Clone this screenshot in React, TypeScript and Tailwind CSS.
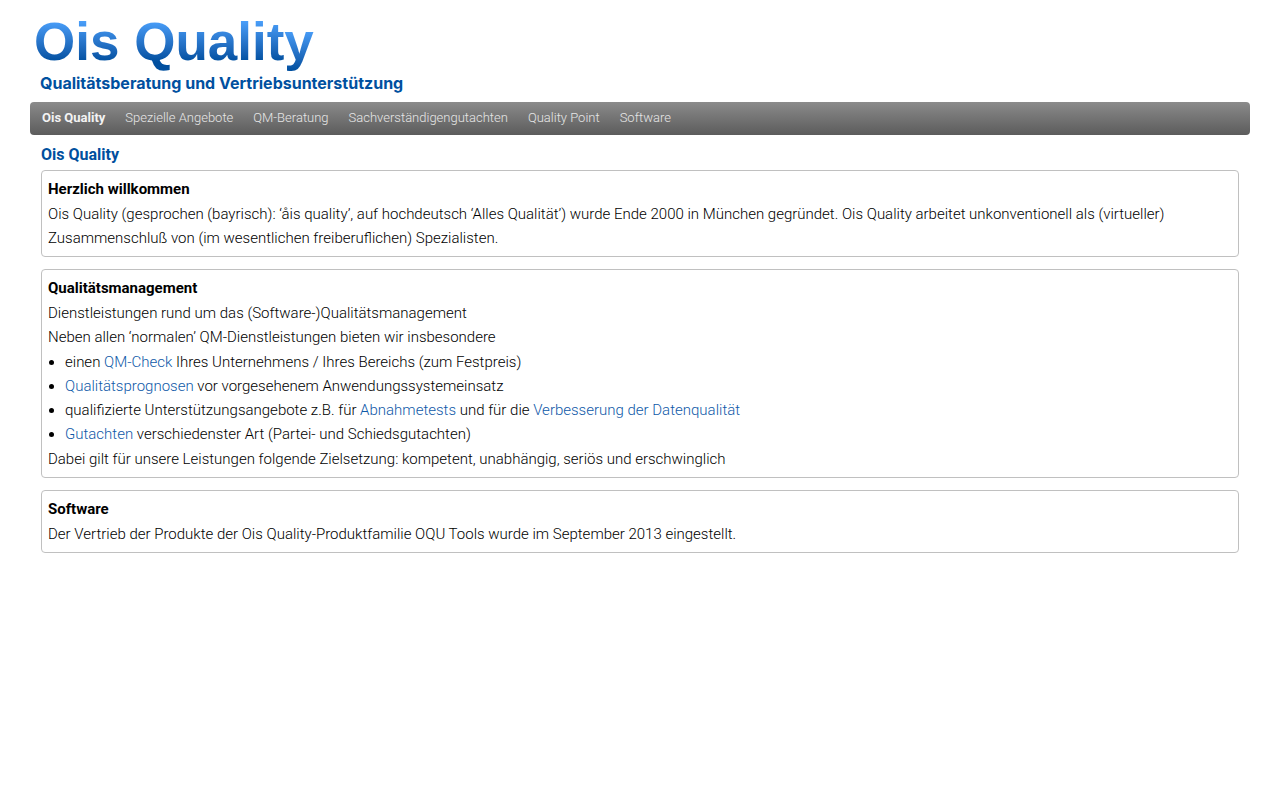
import type { ReactNode } from "react";
import clsx from "clsx";

const navItems = [
  "Ois Quality",
  "Spezielle Angebote",
  "QM-Beratung",
  "Sachverständigengutachten",
  "Quality Point",
  "Software",
];

interface PanelProps {
  title: string;
  children: ReactNode;
}

function Panel({ title, children }: PanelProps) {
  return (
    <section className="rounded border border-[#c0c0c0] px-1.5 py-1.5">
      <h2 className="leading-[25px] font-bold">{title}</h2>
      {children}
    </section>
  );
}

function TextLink({ children }: { children: ReactNode }) {
  return (
    <a href="#" className="text-[#0f59a8] hover:underline">
      {children}
    </a>
  );
}

function Logo() {
  return (
    <header className="px-1 pt-3 font-['Liberation_Sans',sans-serif] font-bold">
      <div className="text-[53px] leading-[60px] text-transparent">
        <span className="bg-linear-to-b from-[#4a9ffa] from-15% to-[#004f9f] to-85% bg-clip-text">
          Ois Qualit
        </span>
        <span className="bg-linear-to-b from-[#4a9ffa] from-30% to-[#004f9f] to-100% bg-clip-text">
          y
        </span>
      </div>
      <p className="px-1.5 pt-px font-['Inter',sans-serif] text-[16px] leading-[20px] font-bold text-[#00509f]">
        Qualitätsberatung und Vertriebsunterstützung
      </p>
    </header>
  );
}

export default function App() {
  return (
    <div className="min-h-screen bg-white px-[30px] font-['Roboto',sans-serif] font-light text-black">
      <Logo />
      <nav className="mt-[9px] rounded bg-linear-to-b from-[#8b8b8b] to-[#5c5c5c] px-3 pt-[5px] pb-[7px]">
        <ul className="flex flex-wrap gap-x-5 text-[13px] leading-[21px]">
          {navItems.map((item, i) => (
            <li key={item}>
              <a
                href="#"
                className={clsx(i === 0 ? "font-bold text-[#f3f3f3]" : "text-[#e6e6e6]")}
              >
                {item}
              </a>
            </li>
          ))}
        </ul>
      </nav>

      <main className="px-[11px] pt-2">
        <h1 className="mb-[3px] text-[16px] leading-[24px] font-bold text-[#004f9e]">
          Ois Quality
        </h1>
        <div className="flex flex-col gap-3 text-[15px] leading-[24px]">
          <Panel title="Herzlich willkommen">
            <p>
              Ois Quality (gesprochen (bayrisch): ‘åis quality’, auf hochdeutsch ‘Alles Qualität’)
              wurde Ende 2000 in München gegründet. Ois Quality arbeitet unkonventionell als
              (virtueller) Zusammenschluß von (im wesentlichen freiberuflichen) Spezialisten.
            </p>
          </Panel>

          <Panel title="Qualitätsmanagement">
            <p>Dienstleistungen rund um das (Software-)Qualitätsmanagement</p>
            <p>Neben allen ‘normalen’ QM-Dienstleistungen bieten wir insbesondere</p>
            <ul className="my-px list-disc pl-[17px]">
              <li>
                einen <TextLink>QM-Check</TextLink> Ihres Unternehmens / Ihres Bereichs (zum
                Festpreis)
              </li>
              <li>
                <TextLink>Qualitätsprognosen</TextLink> vor vorgesehenem Anwendungssystemeinsatz
              </li>
              <li>
                qualifizierte Unterstützungsangebote z.B. für <TextLink>Abnahmetests</TextLink> und
                für die <TextLink>Verbesserung der Datenqualität</TextLink>
              </li>
              <li>
                <TextLink>Gutachten</TextLink> verschiedenster Art (Partei- und Schiedsgutachten)
              </li>
            </ul>
            <p>
              Dabei gilt für unsere Leistungen folgende Zielsetzung: kompetent, unabhängig, seriös
              und erschwinglich
            </p>
          </Panel>

          <Panel title="Software">
            <p>
              Der Vertrieb der Produkte der Ois Quality-Produktfamilie OQU Tools wurde im September
              2013 eingestellt.
            </p>
          </Panel>
        </div>
      </main>
    </div>
  );
}
